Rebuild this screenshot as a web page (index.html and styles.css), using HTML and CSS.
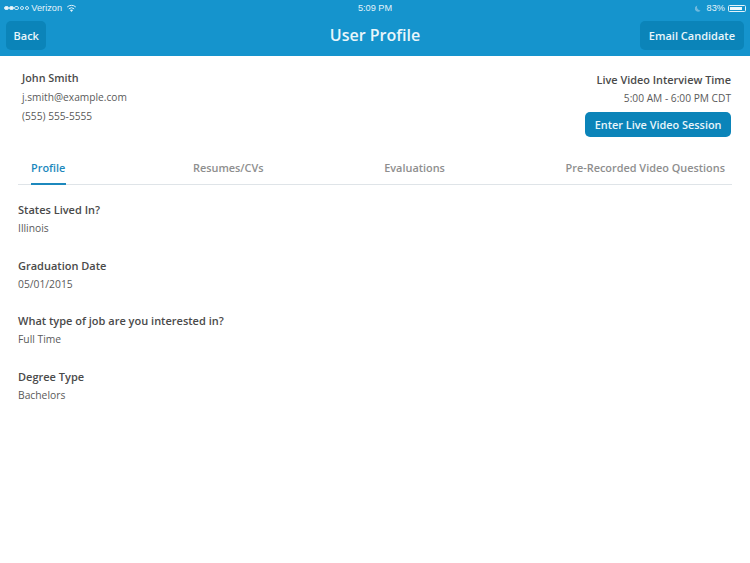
FILE: index.html
```html
<!DOCTYPE html>
<html lang="en">
<head>
<meta charset="utf-8">
<title>User Profile</title>
<link rel="stylesheet" href="styles.css">
</head>
<body>
<header class="topbar">
  <div class="status">
    <div class="status-left">
      <span class="signal"><i class="dot on"></i><i class="dot on"></i><i class="dot"></i><i class="dot"></i><i class="dot"></i></span>
      <span>Verizon</span>
      <svg class="wifi" width="11" height="8" viewBox="0 0 11 8"><path d="M5.5 8 3.9 6.1a2.4 2.4 0 0 1 3.2 0Z" fill="#dff1fa"/><path d="M2.8 4.9a4 4 0 0 1 5.4 0M1.2 3a6.4 6.4 0 0 1 8.6 0" fill="none" stroke="#dff1fa" stroke-width="1"/></svg>
    </div>
    <div class="status-time">5:09 PM</div>
    <div class="status-right">
      <svg class="moon" width="6" height="7" viewBox="0 0 6 7"><path d="M2.4.4a3.2 3.2 0 1 0 3.2 5A3.4 3.4 0 0 1 2.4.4Z" fill="#6fb9de"/></svg>
      <span>83%</span>
      <span class="battery"><span class="battery-fill"></span></span>
    </div>
  </div>
  <div class="navrow">
    <div class="nav-start"><button class="navbtn back">Back</button></div>
    <h1 class="navtitle">User Profile</h1>
    <div class="nav-end"><button class="navbtn">Email Candidate</button></div>
  </div>
</header>
<main class="content">
  <section class="summary">
    <div class="person">
      <div class="person-name">John Smith</div>
      <div class="person-line">j.smith@example.com</div>
      <div class="person-line">(555) 555-5555</div>
    </div>
    <div class="session">
      <div class="session-title">Live Video Interview Time</div>
      <div class="session-time">5:00 AM - 6:00 PM CDT</div>
      <button class="session-btn">Enter Live Video Session</button>
    </div>
  </section>
  <nav class="tabs">
    <a class="tab active">Profile</a>
    <a class="tab">Resumes/CVs</a>
    <a class="tab">Evaluations</a>
    <a class="tab">Pre-Recorded Video Questions</a>
  </nav>
  <section class="fields">
    <div class="field"><div class="field-label">States Lived In?</div><div class="field-value">Illinois</div></div>
    <div class="field"><div class="field-label">Graduation Date</div><div class="field-value">05/01/2015</div></div>
    <div class="field"><div class="field-label">What type of job are you interested in?</div><div class="field-value">Full Time</div></div>
    <div class="field"><div class="field-label">Degree Type</div><div class="field-value">Bachelors</div></div>
  </section>
</main>
</body>
</html>
```
FILE: styles.css
```css
* { box-sizing: border-box; }
html, body { margin: 0; padding: 0; }
body {
  width: 750px;
  height: 563px;
  background: #fff;
  overflow: hidden;
  font-family: "Open Sans", "Noto Sans", sans-serif;
  color: #444;
}
.topbar { background: #1594cd; height: 56px; color: #e6f5fb; }
.status {
  height: 16px;
  display: grid;
  grid-template-columns: 1fr auto 1fr;
  align-items: center;
  padding: 0 4px;
  font-family: "Liberation Sans", sans-serif;
  font-size: 9.2px;
  color: #e3f3fa;
}
.status-left { display: flex; align-items: center; gap: 2px; }
.signal { display: flex; gap: 0.6px; }
.dot { width: 4.6px; height: 4.6px; border-radius: 50%; border: 0.6px solid #cfe9f5; }
.dot.on { background: #eef8fc; }
.wifi { margin-left: 2px; }
.status-right { display: flex; align-items: center; justify-content: flex-end; gap: 3px; }
.moon { margin-right: 3px; }
.battery { width: 18px; height: 7px; border: 0.7px solid #e3f3fa; border-radius: 1.5px; padding: 1px; display: block; }
.battery-fill { display: block; height: 100%; width: 83%; background: #eef8fc; }
.navrow {
  height: 40px;
  display: grid;
  grid-template-columns: 1fr auto 1fr;
  align-items: start;
  padding: 5px 6px 0;
}
.nav-end { display: flex; justify-content: flex-end; }
.navbtn {
  height: 29px;
  padding: 0 9px;
  border: 0;
  border-radius: 5px;
  background: #0b84b9;
  color: #e9f6fb;
  font-family: inherit;
  font-size: 11px;
  font-weight: 600;
}
.navbtn.back { padding: 0 7.5px; }
.navtitle {
  margin: 0;
  font-size: 16px;
  font-weight: 600;
  line-height: 29px;
  color: #e9f6fb;
}
.content { padding: 0 18px; }
.summary { display: flex; justify-content: space-between; padding: 13px 1px 0 4px; height: 95px; }
.person-name { font-size: 10.8px; font-weight: 600; line-height: 18px; color: #4a4a4a; }
.person-line { font-size: 10.2px; line-height: 19px; color: #5a5a5a; margin-top: 0.5px; }
.session { display: flex; flex-direction: column; align-items: flex-end; padding-top: 2px; }
.session-title { font-size: 10.9px; font-weight: 600; line-height: 18px; color: #4a4a4a; }
.session-time { font-size: 10.2px; line-height: 19px; color: #5a5a5a; }
.session-btn {
  margin-top: 4px;
  height: 25px;
  padding: 0 9.5px;
  border: 0;
  border-radius: 5px;
  background: #0b84b9;
  color: #e9f6fb;
  font-family: inherit;
  font-size: 10.9px;
  font-weight: 600;
}
.tabs {
  display: flex;
  justify-content: space-between;
  height: 34px;
  border-bottom: 1px solid #dfe4e8;
  padding: 0 7px 0 13px;
}
.tab { font-size: 10.9px; font-weight: 600; line-height: 33px; color: #8e8e8e; height: 34px; }
.tab.active { color: #1c88bd; border-bottom: 2px solid #1c88bd; margin-right: 6px; padding-right: 1px; }
.fields { padding-top: 16px; }
.field { height: 55.7px; }
.field-label { font-size: 11px; font-weight: 600; line-height: 18px; color: #4a4a4a; }
.field-value { font-size: 10.3px; line-height: 17px; color: #5a5a5a; margin-top: 1px; }
```
